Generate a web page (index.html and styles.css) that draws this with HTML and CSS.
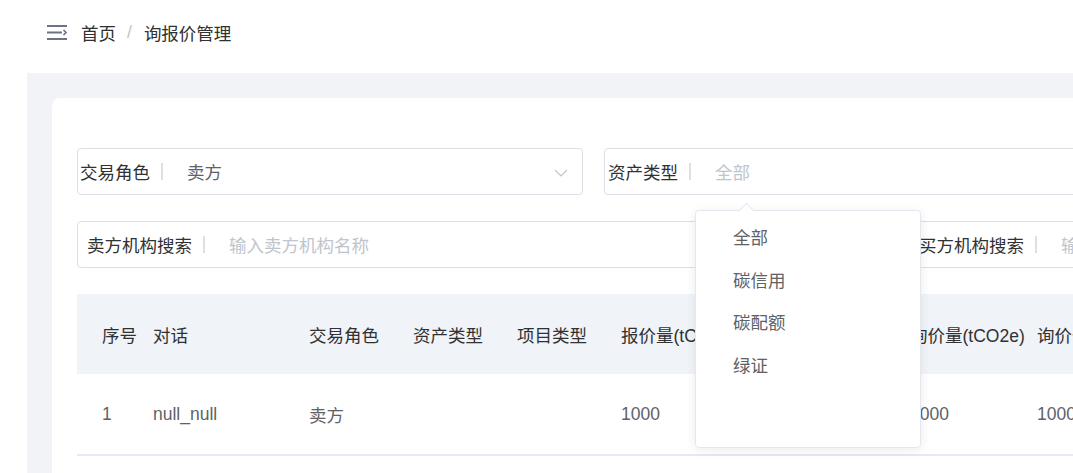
FILE: index.html
```html
<!DOCTYPE html>
<html lang="zh-CN">
<head>
<meta charset="utf-8">
<title>询报价管理</title>
<link rel="stylesheet" href="styles.css">
</head>
<body>
<div class="app">
  <header class="navbar">
    <svg class="menu-icon" width="20" height="15" viewBox="0 0 20 15" aria-hidden="true">
      <path d="M0 1H20M0 7.5H15M0 14H20" stroke="#6b7385" stroke-width="2" fill="none"/>
      <path d="M16.5 5L19 7.5L16.5 10" stroke="#6b7385" stroke-width="1.6" fill="none"/>
    </svg>
    <nav class="breadcrumb">
      <span class="crumb">首页</span>
      <span class="crumb-sep">/</span>
      <span class="crumb current">询报价管理</span>
    </nav>
  </header>

  <main class="main">
    <section class="card">
      <div class="filters">
        <div class="filter-row">
          <div class="field field-role">
            <span class="field-label">交易角色</span>
            <span class="field-sep"></span>
            <span class="field-value">卖方</span>
            <svg class="chevron" width="14" height="8" viewBox="0 0 14 8" aria-hidden="true">
              <path d="M1 1L7 7L13 1" stroke="#c0c4cc" stroke-width="1.2" fill="none"/>
            </svg>
          </div>
          <div class="field field-asset">
            <span class="field-label">资产类型</span>
            <span class="field-sep"></span>
            <span class="field-placeholder">全部</span>
          </div>
        </div>
        <div class="filter-row row-2">
          <div class="field field-seller">
            <span class="field-label">卖方机构搜索</span>
            <span class="field-sep"></span>
            <span class="field-placeholder">输入卖方机构名称</span>
          </div>
          <div class="field field-buyer">
            <span class="field-label">买方机构搜索</span>
            <span class="field-sep"></span>
            <span class="field-placeholder">输入买方机构名称</span>
          </div>
        </div>
      </div>

      <div class="table">
        <div class="tr thead">
          <div class="cell first">序号</div>
          <div class="cell">对话</div>
          <div class="cell">交易角色</div>
          <div class="cell">资产类型</div>
          <div class="cell">项目类型</div>
          <div class="cell">报价量(tCO2e)</div>
          <div class="cell">报价价格</div>
          <div class="cell">询价量(tCO2e)</div>
          <div class="cell">询价价格</div>
        </div>
        <div class="tr tbody">
          <div class="cell first">1</div>
          <div class="cell">null_null</div>
          <div class="cell">卖方</div>
          <div class="cell"></div>
          <div class="cell"></div>
          <div class="cell">1000</div>
          <div class="cell">1000</div>
          <div class="cell">1000</div>
          <div class="cell">1000</div>
        </div>
      </div>
    </section>
  </main>

  <div class="dropdown">
    <span class="dropdown-arrow"></span>
    <ul class="dropdown-list">
      <li class="dropdown-item">全部</li>
      <li class="dropdown-item">碳信用</li>
      <li class="dropdown-item">碳配额</li>
      <li class="dropdown-item">绿证</li>
    </ul>
  </div>
</div>
</body>
</html>
```

FILE: styles.css
```css
* { box-sizing: border-box; }

html, body {
  margin: 0;
  padding: 0;
  background: #ffffff;
}

body {
  width: 1073px;
  height: 473px;
  overflow: hidden;
  font-family: "Liberation Sans", "Noto Sans CJK SC", sans-serif;
  font-size: 17.5px;
  color: #303133;
}

.app {
  position: relative;
  width: 1073px;
  height: 473px;
  overflow: hidden;
}

/* Navbar */
.navbar {
  height: 73px;
  display: flex;
  align-items: center;
  padding-left: 47px;
  padding-bottom: 8px;
}

.menu-icon { display: block; flex: none; }

.breadcrumb {
  margin-left: 14px;
  display: flex;
  align-items: center;
}

.crumb { color: #303133; }
.crumb-sep {
  color: #c0c4cc;
  margin: 0 12px 0 11px;
}

/* Main area */
.main {
  margin-left: 27px;
  height: 400px;
  background: #f1f3f6;
  padding: 25px 0 0 25px;
  overflow: hidden;
}

.card {
  width: 1200px;
  height: 500px;
  background: #ffffff;
  border-radius: 8px;
  padding: 50px 0 0 25px;
}

/* Filters */
.filter-row {
  display: flex;
  gap: 21px;
}

.filter-row.row-2 { margin-top: 26px; }

.field {
  height: 47px;
  border: 1px solid #dcdfe6;
  border-radius: 4px;
  display: flex;
  align-items: center;
  flex: none;
  position: relative;
}

.field-role { width: 506px; padding-left: 2px; }
.field-asset { width: 600px; padding-left: 3px; }
.field-seller { width: 811px; padding-left: 9px; }
.field-buyer { width: 400px; padding-left: 9px; }

.field-label { color: #303133; white-space: nowrap; }

.field-sep {
  width: 2px;
  height: 17px;
  background: #dcdfe6;
  margin: 0 24px 0 11px;
  flex: none;
}

.field-value { color: #606266; }
.field-placeholder { color: #c0c4cc; white-space: nowrap; }

.chevron {
  position: absolute;
  right: 14px;
  top: 20px;
}

/* Table */
.table {
  margin-top: 26px;
  width: 1100px;
}

.tr {
  display: grid;
  grid-template-columns: 76px 156px 104px 104px 104px 150px 139px 127px 140px;
  align-items: center;
  white-space: nowrap;
}

.thead {
  height: 80px;
  background: #f0f3f7;
  color: #303133;
}

.tbody {
  height: 82px;
  color: #606266;
  border-bottom: 2px solid #e6e9f1;
}

.cell { overflow: hidden; }
.cell.first { padding-left: 25px; }

/* Dropdown */
.dropdown {
  position: absolute;
  left: 695px;
  top: 210px;
  width: 226px;
  height: 238px;
  background: #ffffff;
  border: 1px solid #e4e7ed;
  border-radius: 4px;
  box-shadow: 0 2px 12px rgba(0, 0, 0, 0.08);
}

.dropdown-arrow {
  position: absolute;
  left: 45px;
  top: -6px;
  width: 11px;
  height: 11px;
  background: #ffffff;
  border-left: 1px solid #e4e7ed;
  border-top: 1px solid #e4e7ed;
  transform: rotate(45deg);
}

.dropdown-list {
  list-style: none;
  margin: 0;
  padding: 6px 0 0 0;
}

.dropdown-item {
  height: 42.6px;
  line-height: 42.6px;
  padding-left: 37px;
  color: #606266;
}
```
